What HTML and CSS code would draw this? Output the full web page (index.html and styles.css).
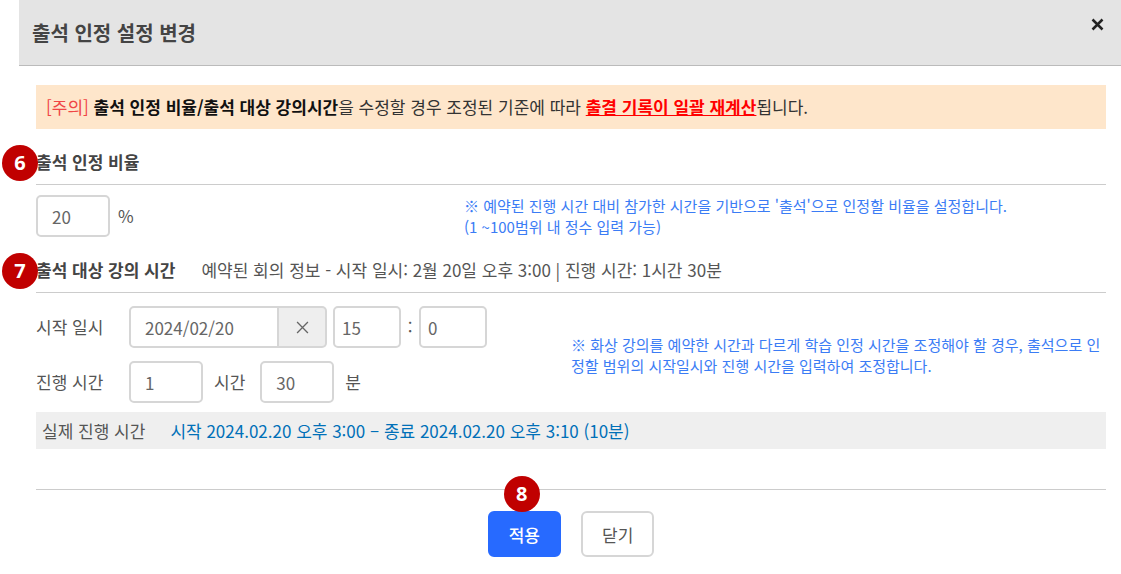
FILE: index.html
```html
<!DOCTYPE html>
<html lang="ko">
<head>
    <meta charset="UTF-8">
    <meta name="viewport" content="width=device-width, initial-scale=1.0">
    <title>출석 인정 설정 변경</title>
    <link rel="stylesheet" href="styles.css">
</head>
<body>
    <div class="modal">
        <header class="modal-header">
            <h1>출석 인정 설정 변경</h1>
            <button class="modal-close" type="button" aria-label="닫기">
                <svg viewBox="0 0 12 12"><path d="M2 2L10 10M2 10L10 2"></path></svg>
            </button>
        </header>

        <form class="modal-body">
            <p class="notice">
                <span class="notice-label">[주의]</span>
                <strong>출석 인정 비율/출석 대상 강의시간</strong>을 수정할 경우 조정된 기준에 따라 <strong class="notice-point">출결 기록이 일괄 재계산</strong>됩니다.
            </p>

            <!-- 출석 인정 비율 -->
            <section>
                <div class="section-title">
                    <span class="marker">6</span>
                    <h2><label for="rate">출석 인정 비율</label></h2>
                </div>
                <div class="section-row">
                    <div class="rate-field">
                        <input class="input" id="rate" type="text" inputmode="numeric" value="20">
                        <span>%</span>
                    </div>
                    <p class="hint hint-rate">※ 예약된 진행 시간 대비 참가한 시간을 기반으로 '출석'으로 인정할 비율을 설정합니다.<br>(1 ~100범위 내 정수 입력 가능)</p>
                </div>
            </section>

            <!-- 출석 대상 강의 시간 -->
            <section>
                <div class="section-title">
                    <span class="marker">7</span>
                    <h2>출석 대상 강의 시간</h2>
                    <span class="section-info">예약된 회의 정보 - 시작 일시: 2월 20일 오후 3:00 | 진행 시간: 1시간 30분</span>
                </div>
                <div class="section-row time-row">
                    <div class="time-fields">
                        <div class="field">
                            <label class="field-label" for="start-date">시작 일시</label>
                            <div class="date-group">
                                <input class="input date-input" id="start-date" type="text" value="2024/02/20">
                                <button class="date-clear" type="button" aria-label="날짜 지우기">
                                    <svg viewBox="0 0 12 12"><path d="M1 1L11 11M1 11L11 1"></path></svg>
                                </button>
                            </div>
                            <input class="input time-input" type="text" value="15" aria-label="시">
                            <span class="colon">:</span>
                            <input class="input time-input" type="text" value="0" aria-label="분">
                        </div>
                        <div class="field">
                            <label class="field-label" for="hours">진행 시간</label>
                            <input class="input" id="hours" type="text" value="1">
                            <label class="unit" for="hours">시간</label>
                            <input class="input" id="minutes" type="text" value="30">
                            <label class="unit" for="minutes">분</label>
                        </div>
                    </div>
                    <p class="hint hint-time">※ 화상 강의를 예약한 시간과 다르게 학습 인정 시간을 조정해야 할 경우, 출석으로 인정할 범위의 시작일시와 진행 시간을 입력하여 조정합니다.</p>
                </div>
                <div class="actual">
                    <span>실제 진행 시간</span>
                    <span class="actual-time">시작 2024.02.20 오후 3:00 – 종료 2024.02.20 오후 3:10 (10분)</span>
                </div>
            </section>

            <footer class="modal-footer">
                <div class="apply">
                    <span class="marker marker-apply">8</span>
                    <button class="button apply-button" type="submit">적용</button>
                </div>
                <button class="button close-button" type="button">닫기</button>
            </footer>
        </form>
    </div>
</body>
</html>
```

FILE: styles.css
```css
* {
    box-sizing: border-box;
    margin: 0;
    padding: 0;
}

body {
    font-family: 'Noto Sans CJK KR', 'Noto Sans', sans-serif;
    font-size: 17px;
    line-height: 24px;
    color: #555;
    background-color: #fff;
}

.modal {
    margin-left: 19px;
}

.modal-header {
    display: flex;
    align-items: flex-start;
    justify-content: space-between;
    padding: 17px 16px 16px 13px;
    background-color: #e4e4e4;
    border-bottom: 1px solid #bbb;
}

h1 {
    font-size: 20px;
    font-weight: 700;
    line-height: 32px;
    color: #444;
}

.modal-close {
    width: 15px;
    height: 15px;
    border: none;
    background: none;
    cursor: pointer;
}

.modal-close svg {
    display: block;
    width: 15px;
    height: 15px;
    stroke: #222;
    stroke-width: 2;
    fill: none;
}

.modal-body {
    padding: 19px 15px 16px 17px;
}

.notice {
    padding: 10px;
    background-color: #fee6cb;
    color: #333;
}

.notice strong {
    font-weight: 700;
    color: #111;
}

.notice .notice-label {
    color: #f04545;
}

.notice .notice-point {
    color: #f00;
    text-decoration: underline;
}

.section-title {
    position: relative;
    display: flex;
    align-items: center;
    gap: 26px;
    padding: 21px 0 10px;
    border-bottom: 1px solid #ccc;
}

h2 {
    font-size: 17px;
    font-weight: 700;
    color: #444;
}

/* 설명용 번호 */
.marker {
    position: absolute;
    left: -34px;
    top: 16px;
    width: 36px;
    height: 36px;
    border-radius: 50%;
    background-color: #c00000;
    color: #fff;
    font-family: 'Noto Sans', sans-serif;
    font-size: 20px;
    font-weight: 700;
    line-height: 36px;
    text-align: center;
}

.section-row {
    display: flex;
    padding-top: 10px;
}

.rate-field {
    display: flex;
    align-items: center;
    gap: 8px;
    width: 40%;
}

.input {
    width: 74px;
    height: 42px;
    padding: 0 14px;
    border: 2px solid #d6d6d6;
    border-radius: 5px;
    background-color: #fff;
    color: #666;
    font-family: inherit;
    font-size: 17px;
}

.hint {
    font-size: 15px;
    line-height: 21px;
    color: #3b7cf5;
}

.hint-rate {
    width: 60%;
}

.time-row {
    align-items: center;
    padding: 13px 0 9px;
}

.time-fields {
    display: flex;
    flex-direction: column;
    gap: 13px;
    width: 50%;
}

.hint-time {
    width: 50%;
    word-break: break-all;
}

.field {
    display: flex;
    align-items: center;
}

.field-label {
    width: 93px;
}

.date-group {
    display: flex;
    margin-right: 6px;
}

.date-input {
    width: 150px;
    border-radius: 5px 0 0 5px;
}

.date-clear {
    display: flex;
    align-items: center;
    justify-content: center;
    width: 48px;
    border: 2px solid #d6d6d6;
    border-left: none;
    border-radius: 0 5px 5px 0;
    background-color: #eee;
    cursor: pointer;
}

.date-clear svg {
    width: 13px;
    height: 13px;
    stroke: #666;
    stroke-width: 1.2;
    fill: none;
}

.time-input {
    width: 68px;
    padding: 0 7px;
}

.colon {
    width: 18px;
    text-align: center;
}

.unit {
    margin: 0 15px 0 11px;
}

.actual {
    display: flex;
    align-items: center;
    gap: 25px;
    padding: 7px 6px 6px;
    background-color: #efefef;
}

.actual-time {
    color: #0070b8;
}

.modal-footer {
    display: flex;
    align-items: center;
    justify-content: center;
    gap: 20px;
    margin-top: 40px;
    padding-top: 21px;
    border-top: 1px solid #ccc;
}

.apply {
    position: relative;
}

.marker-apply {
    left: 16px;
    top: -35px;
}

.button {
    display: block;
    height: 46px;
    padding: 0 19px;
    border: 2px solid #d6d6d6;
    border-radius: 6px;
    font-family: inherit;
    font-size: 17px;
    cursor: pointer;
}

.apply-button {
    border-color: #276aff;
    background-color: #276aff;
    color: #fff;
    font-weight: 500;
}

.close-button {
    background-color: #fff;
    color: #555;
}
```
